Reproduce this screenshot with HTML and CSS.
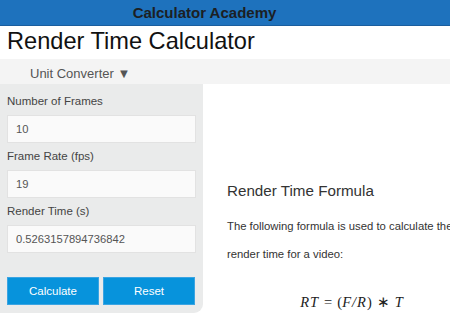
FILE: index.html
```html
<!DOCTYPE html>
<html lang="en">
<head>
  <meta charset="UTF-8">
  <meta name="viewport" content="width=device-width, initial-scale=1.0">
  <title>Render Time Calculator</title>
  <link rel="stylesheet" href="styles.css">
</head>
<body>
  <div class="site-header">
    <span class="brand">Calculator Academy</span>
  </div>
  <h1 class="page-title">Render Time Calculator</h1>
  <div class="nav-bar">
    <span class="nav-item">Unit Converter &#9660;</span>
  </div>

  <div class="content">
    <div class="calc-panel">
      <label for="frames">Number of Frames</label>
      <input type="text" id="frames" value="10">

      <label for="rate">Frame Rate (fps)</label>
      <input type="text" id="rate" value="19">

      <label for="render-time">Render Time (s)</label>
      <input type="text" id="render-time" value="0.5263157894736842">

      <div class="buttons">
        <button class="btn">Calculate</button>
        <button class="btn">Reset</button>
      </div>
    </div>

    <div class="article">
      <h2>Render Time Formula</h2>
      <p>The following formula is used to calculate the render time for a video:</p>
      <div class="formula">
        <span class="mi">R</span><span class="mi">T</span><span class="mo">=</span>(<span class="mi">F</span><span class="mi">/</span><span class="mi">R</span>)<span class="mo">&lowast;</span><span class="mi">T</span>
      </div>
    </div>
  </div>
</body>
</html>
```

FILE: styles.css
```css
/* General styles */
body {
  font-family: "Liberation Sans", Arial, sans-serif;
  margin: 0;
  padding: 0;
  width: 450px;
  height: 320px;
  overflow: hidden;
  background-color: #fff;
}

/* Top header */
.site-header {
  height: 25px;
  background-color: #1e72bd;
  border-bottom: 1px solid #1a5e9e;
  text-align: center;
  padding-right: 41px;
  line-height: 25px;
}

.brand {
  font-size: 15px;
  font-weight: bold;
  color: #1c1f24;
}

.page-title {
  margin: 0;
  height: 33px;
  padding-left: 7px;
  font-size: 23.6px;
  font-weight: normal;
  line-height: 30px;
  color: #111;
}

/* Nav bar */
.nav-bar {
  height: 25px;
  background-color: #f4f4f4;
  padding-left: 30px;
  line-height: 27px;
}

.nav-item {
  font-size: 13px;
  color: #555;
}

/* Main layout */
.content {
  display: flex;
  align-items: flex-start;
}

/* Calculator panel */
.calc-panel {
  flex: 0 0 203px;
  box-sizing: border-box;
  padding: 8px 7px 8px 7px;
  background-color: #eaebeb;
  border-bottom-right-radius: 9px;
}

.calc-panel label {
  display: block;
  font-size: 11.5px;
  line-height: 18px;
  color: #444;
  margin-bottom: 5px;
}

.calc-panel input {
  display: block;
  box-sizing: border-box;
  width: 189px;
  height: 28px;
  margin: 0 0 4px 0;
  padding: 0 8px;
  font-family: "Liberation Sans", Arial, sans-serif;
  font-size: 11.2px;
  color: #555;
  background-color: #fafafa;
  border: 1px solid #e2e2e2;
  border-radius: 0;
  outline: none;
}

.buttons {
  display: flex;
  gap: 4px;
  margin-top: 24px;
}

.btn {
  width: 92px;
  height: 28px;
  padding: 0;
  font-family: "Liberation Sans", Arial, sans-serif;
  font-size: 11.5px;
  color: #fff;
  background-color: #0793dc;
  border: 1px solid #3ba4e2;
  cursor: pointer;
}

/* Article side */
.article {
  flex: 0 0 250px;
  padding: 0 0 0 24px;
}

.article h2 {
  margin: 98px 0 12px 0;
  font-size: 15.2px;
  font-weight: normal;
  line-height: 18px;
  color: #333;
}

.article p {
  margin: 0;
  font-size: 11.3px;
  line-height: 28px;
  color: #333;
}

.formula {
  margin-top: 24px;
  text-align: center;
  font-family: "Liberation Serif", "Times New Roman", serif;
  font-size: 14.5px;
  line-height: 20px;
  color: #222;
}

.formula .mi {
  font-style: italic;
  padding-right: 1px;
}

.formula .mo {
  padding: 0 5px;
}
```
